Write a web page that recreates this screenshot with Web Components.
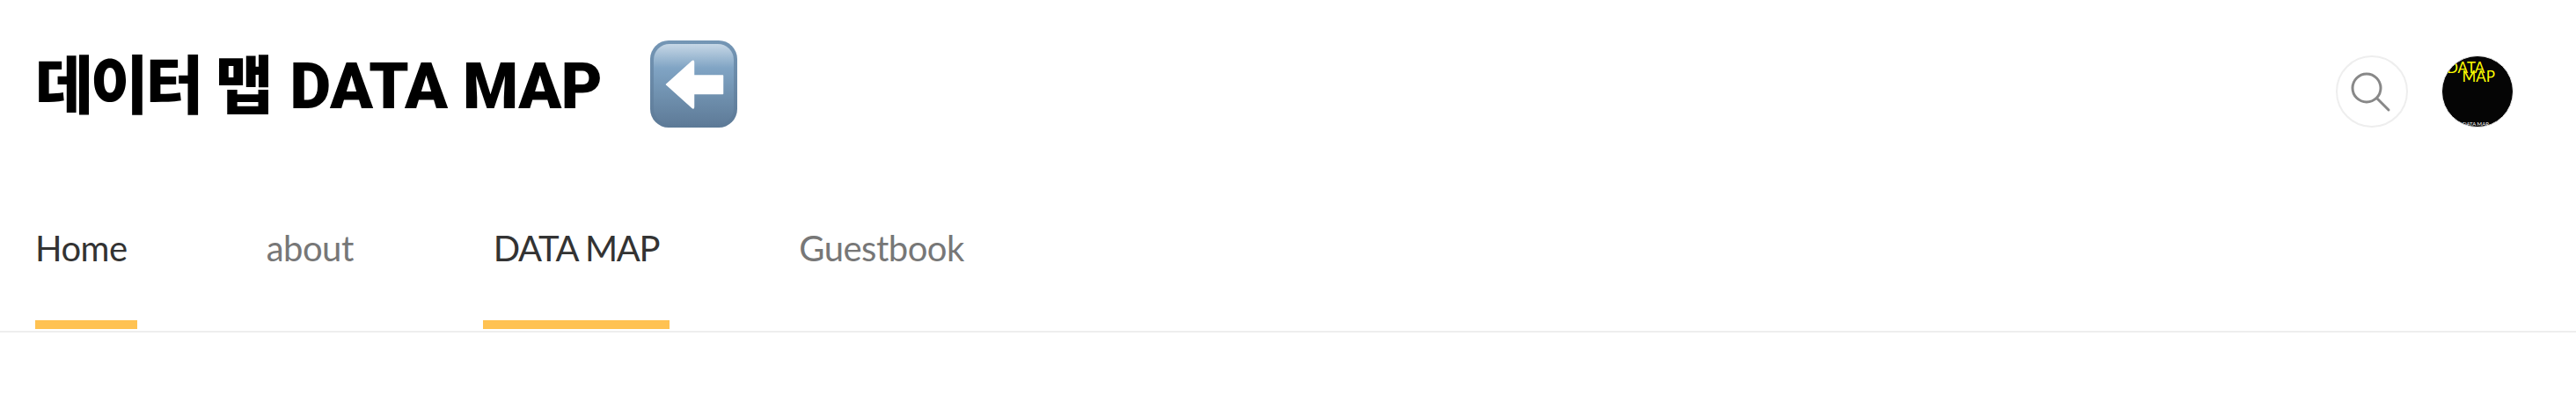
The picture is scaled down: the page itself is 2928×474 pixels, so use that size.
<!DOCTYPE html>
<html lang="ko"><head><meta charset="utf-8"><title>DATA MAP</title>
<style>
html,body{margin:0;padding:0;background:#fff}
body{font-family:"Lato","Noto Sans CJK KR",sans-serif}
</style></head><body>
<site-header>
  <site-title slot="title"></site-title>
  <nav-tab first active>Home</nav-tab>
  <nav-tab>about</nav-tab>
  <nav-tab active style="--ls:-1.300px">DATA MAP</nav-tab>
  <nav-tab>Guestbook</nav-tab>
</site-header>
<script>
function def(name, html){
  customElements.define(name, class extends HTMLElement{
    constructor(){super();this.attachShadow({mode:'open'}).innerHTML=html;}
  });
}
def('back-emoji',`<style>:host{display:block;width:99px;height:99px}svg{display:block}</style>
<svg width="99" height="99" viewBox="0 0 99 99" role="img" aria-label="back arrow">
<defs><linearGradient id="o" x1="0" y1="0" x2="0" y2="1"><stop offset="0" stop-color="#7496b5"/><stop offset="1" stop-color="#5d7a97"/></linearGradient>
<linearGradient id="i" x1="0" y1="0" x2="0" y2="1"><stop offset="0" stop-color="#c6d7e6"/><stop offset=".3" stop-color="#80a4c4"/><stop offset=".65" stop-color="#6f90ae"/><stop offset="1" stop-color="#5f7c99"/></linearGradient></defs>
<rect width="99" height="99" rx="21" fill="url(#o)"/>
<rect x="4" y="4" width="91" height="91" rx="18" fill="url(#i)"/>
<path d="M18.500 50 48 23.500Q49.500 22.500 49.500 25V40H82.500V60.500H49.500V75.500Q49.500 78 48 76.500Z" fill="#fff" stroke="#fff" stroke-width="1.500" stroke-linejoin="round"/>
</svg>`);
def('site-title',`<style>:host{display:flex;align-items:center;gap:55px}
h1{margin:0;font:900 72px/1 Roboto,"Noto Sans CJK KR",sans-serif;color:#000;white-space:nowrap;letter-spacing:-.5px}
.ko{font-family:"Noto Sans CJK KR",sans-serif;letter-spacing:-3.600px;margin-right:5px}
</style><h1><span class="ko">데이터 맵</span> DATA MAP</h1><back-emoji></back-emoji>`);
def('search-button',`<style>:host{display:block;width:82px;height:82px;box-sizing:border-box;border:2px solid #eee;border-radius:50%}
svg{display:block}</style>
<svg width="78" height="78" viewBox="0 0 78 78" fill="none" stroke="#888" aria-label="search"><circle cx="33" cy="35" r="16" stroke-width="3"/><path d="M45 47 58 60" stroke-width="3" stroke-linecap="round"/></svg>`);
def('avatar-logo',`<style>:host{display:block;width:82px;height:82px;box-sizing:border-box;border:1px solid #eee;border-radius:50%;background:#050505;overflow:hidden;font-family:Lato,sans-serif;color:#ff0;position:relative;padding:8px 0 0 5px}
div{font-size:17px;line-height:10px;white-space:pre}
.c{position:absolute;left:23px;bottom:0;color:#fff;font-size:6px;line-height:7px}</style>
<div>DATA
    MAP</div><div class="c">DATA MAP</div>`);
def('nav-tab',`<style>:host{display:block;position:relative;padding:0 12px;color:#777;font:400 40px/1 var(--nav-font);letter-spacing:var(--ls,-.5px);height:112px;box-sizing:border-box}
:host([first]){padding:0 11px 0 0}
:host([active]){color:#333}
:host([active])::after{content:"";position:absolute;left:0;right:0;bottom:0;height:10px;background:#ffc252}
a{color:inherit;text-decoration:none;display:block;white-space:nowrap}
</style><a><slot></slot></a>`);
def('site-header',`<style>:host{display:block;height:474px;box-sizing:border-box;--nav-font:Lato,"Noto Sans CJK KR",sans-serif}
.top{display:flex;justify-content:space-between;padding:46px 71px 0 40px;height:218px;box-sizing:border-box;align-items:flex-start}
.tools{display:flex;gap:38px;margin-top:17px}
.nav{display:flex;gap:135px;padding:0 40px 2px;align-items:flex-end;border-bottom:2px solid #eee;box-sizing:border-box;height:160px}
</style>
<div class="top"><slot name="title"></slot><div class="tools"><search-button></search-button><avatar-logo></avatar-logo></div></div>
<nav class="nav"><slot></slot></nav>`);
</script>
</body></html>
